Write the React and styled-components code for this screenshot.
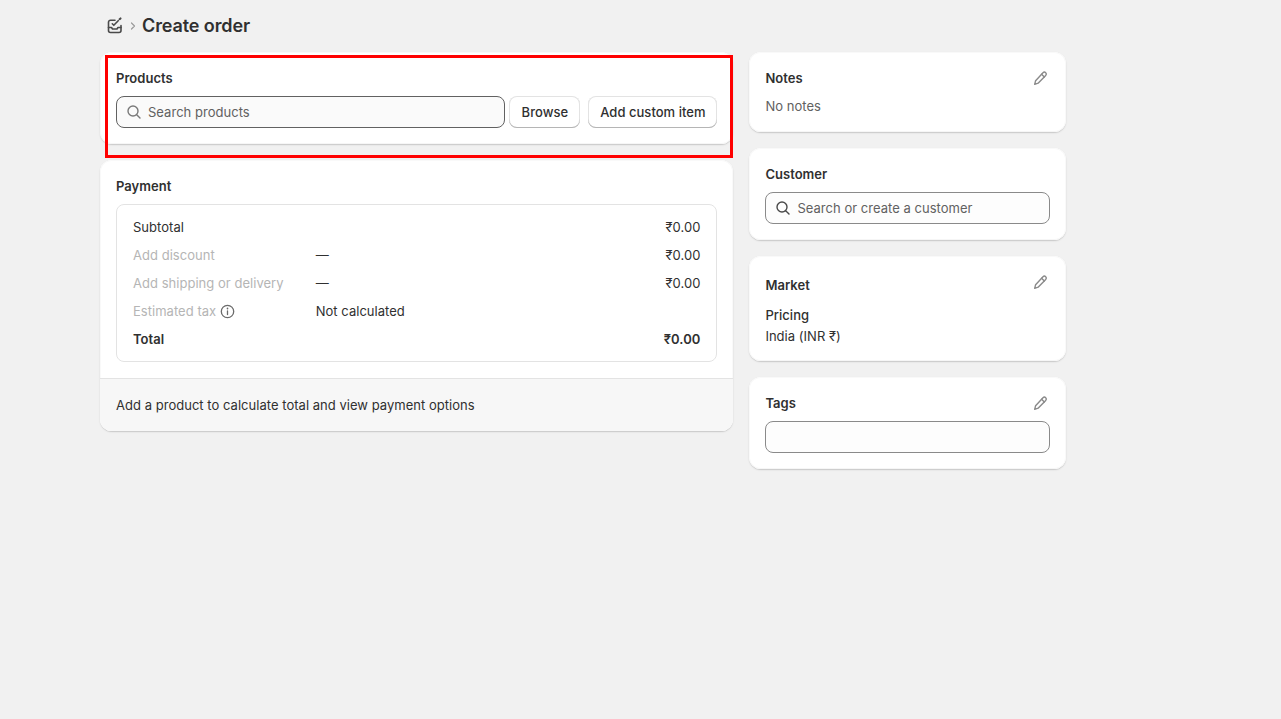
import React from 'react';
import styled, { createGlobalStyle } from 'styled-components';

const GlobalStyle = createGlobalStyle`
  html, body {
    margin: 0;
    background: #f1f1f1;
    font-family: Inter, "Noto Sans", sans-serif;
    font-size: 13px;
    line-height: 20px;
    letter-spacing: 0.03px;
    color: #303030;
  }
  * { box-sizing: border-box; }
`;

const Page = styled.div`
  width: 967px;
  min-height: 719px;
  margin-left: 100px;
`;

const Breadcrumb = styled.div`
  height: 52px;
  display: flex;
  align-items: center;
  padding-left: 6px;
`;

const ChevronMark = styled.span`
  display: flex;
  margin: 0 3px 0 3px;
  color: #9a9a9a;
`;

const PageTitle = styled.h1`
  margin: 0;
  font-size: 18px;
  line-height: 24px;
  font-weight: 600;
  letter-spacing: -0.1px;
  color: #303030;
`;

const Layout = styled.div`
  display: grid;
  grid-template-columns: 633.4px 317px;
  gap: 16px;
  align-items: start;
`;

const Column = styled.div`
  display: flex;
  flex-direction: column;
  gap: 16px;
`;

const Card = styled.section`
  position: relative;
  background: #fff;
  border-radius: 12px;
  box-shadow: 0 1px 0 0 rgba(26, 26, 26, 0.07), 0 1px 0 0 #f9f9f9 inset,
    1px 0 0 0 #f9f9f9 inset, -1px 0 0 0 #f9f9f9 inset, 0 -1px 0 0 #f6f6f6 inset,
    0 1px 2px rgba(0, 0, 0, 0.12);
  overflow: ${(p) => (p.$clip ? 'hidden' : 'visible')};
`;

const CardBody = styled.div`
  padding: 16px 16px ${(p) => p.$bottom ?? 16}px;
`;

const HeadRow = styled.div`
  display: flex;
  justify-content: space-between;
  align-items: flex-start;
  margin-bottom: ${(p) => p.$after ?? 8}px;
`;

const CardTitle = styled.h2`
  margin: ${(p) => p.$top || 0}px 0 0;
  font-size: 13px;
  line-height: 20px;
  font-weight: 600;
  color: #303030;
`;

const EditMark = styled.span`
  display: flex;
  width: 20px;
  height: 20px;
  color: #8a8a8a;
`;

const SearchRow = styled.div`
  display: flex;
  gap: 4px;
`;

const InputBox = styled.div`
  flex: 1;
  height: 32px;
  display: flex;
  align-items: center;
  gap: 6px;
  padding: 0 9px;
  background: #fdfdfd;
  border: 1px solid #8a8a8a;
  border-radius: 8px;
  color: #616161;
`;

const ProductsInput = styled(InputBox)`
  background: #fafafa;
  border-color: #616161;
`;

const SearchMark = styled.span`
  display: flex;
  color: ${(p) => p.$color || '#4a4a4a'};
`;

const Button = styled.button`
  flex: none;
  width: ${(p) => p.$width}px;
  height: 32px;
  margin-left: ${(p) => p.$offset || 0}px;
  padding: 0;
  font: 550 13px/20px Inter, "Noto Sans", sans-serif;
  letter-spacing: 0.03px;
  color: #303030;
  background: #fff;
  border: 0;
  border-radius: 8px;
  box-shadow: 0 -1px 0 0 #b5b5b5 inset, 0 0 0 1px #e3e3e3 inset;
`;

const SummaryBox = styled.div`
  border: 1px solid #e3e3e3;
  border-radius: 8px;
  padding: 8px 16px;
`;

const SummaryRow = styled.div`
  display: grid;
  grid-template-columns: 182.7px 1fr auto;
  align-items: center;
  height: 28px;
  font-weight: ${(p) => (p.$strong ? 600 : 400)};
`;

const SummaryLabel = styled.span`
  display: flex;
  align-items: center;
  gap: 4px;
  color: ${(p) => (p.$muted ? '#b5b5b5' : '#303030')};
`;

const InfoMark = styled.span`
  display: flex;
  color: #6b6b6b;
`;

const PayFooter = styled.div`
  height: 53px;
  display: flex;
  align-items: center;
  padding: 0 16px;
  background: #f7f7f7;
  border-top: 1px solid #e3e3e3;
`;

const Muted = styled.div`
  color: #616161;
`;

const PricingLabel = styled.div`
  font-weight: 500;
  line-height: 21px;
`;

const EmptyInput = styled(InputBox)`
  flex: none;
`;

const Highlight = styled.div`
  position: absolute;
  left: 105px;
  top: 55px;
  width: 628px;
  height: 103px;
  border: 3px solid #f00;
  pointer-events: none;
`;

const OrderIcon = () => (
  <svg width="18" height="18" viewBox="0 0 18 18" fill="none" stroke="#4a4a4a" strokeWidth="1.6" strokeLinecap="round" strokeLinejoin="round">
    <path d="M9 3.2H4.5a2 2 0 0 0-2 2v8.3a2 2 0 0 0 2 2h8.5a2 2 0 0 0 2-2V8.5" />
    <path d="M2.5 10.5h3l1 1.5h4.5l1-1.5h3" />
    <path d="M6.3 6.8l1.5 1.5 4.4-4.6" />
    <path d="M13.6 2.2l.9-.8" strokeWidth="2" />
  </svg>
);

const Chevron = () => (
  <svg width="12" height="12" viewBox="0 0 12 12" fill="none" stroke="currentColor" strokeWidth="1.2" strokeLinecap="round" strokeLinejoin="round">
    <path d="M4.5 3l3 3-3 3" />
  </svg>
);

const SearchIcon = () => (
  <svg width="16" height="16" viewBox="0 0 16 16" fill="none" stroke="currentColor" strokeWidth="1.4" strokeLinecap="round">
    <circle cx="7" cy="7" r="5" />
    <path d="M10.7 10.7l3.3 3.3" />
  </svg>
);

const PencilIcon = () => (
  <svg width="20" height="20" viewBox="0 0 20 20" fill="none" stroke="currentColor" strokeWidth="1.4" strokeLinecap="round" strokeLinejoin="round">
    <path d="M13 4.7a1.9 1.9 0 0 1 2.7 2.7l-7.6 7.8-3.4 1.1.9-3.6z" />
    <path d="M11.6 6.2l2.7 2.7" />
  </svg>
);

const InfoIcon = () => (
  <svg width="15" height="15" viewBox="0 0 15 15" fill="none" stroke="currentColor" strokeWidth="1.3" strokeLinecap="round">
    <circle cx="7.5" cy="7.5" r="6.2" />
    <path d="M7.5 7v3.6" />
    <path d="M7.5 4.4v.2" strokeWidth="1.7" />
  </svg>
);

const rows = [
  { label: 'Subtotal', middle: '', value: '₹0.00' },
  { label: 'Add discount', middle: '—', value: '₹0.00', muted: true },
  { label: 'Add shipping or delivery', middle: '—', value: '₹0.00', muted: true },
  { label: 'Estimated tax', middle: 'Not calculated', value: '', muted: true, info: true },
  { label: 'Total', middle: '', value: '₹0.00', strong: true },
];

const Edit = () => (
  <EditMark>
    <PencilIcon />
  </EditMark>
);

const App = () => {
  return (
    <>
      <GlobalStyle />
      <Page>
        <Breadcrumb>
          <OrderIcon />
          <ChevronMark>
            <Chevron />
          </ChevronMark>
          <PageTitle>Create order</PageTitle>
        </Breadcrumb>
        <Layout>
          <Column>
            <Card>
              <CardBody>
                <HeadRow>
                  <CardTitle>Products</CardTitle>
                </HeadRow>
                <SearchRow>
                  <ProductsInput>
                    <SearchMark $color="#7a7a7a">
                      <SearchIcon />
                    </SearchMark>
                    Search products
                  </ProductsInput>
                  <Button $width={71}>Browse</Button>
                  <Button $width={129} $offset={4}>
                    Add custom item
                  </Button>
                </SearchRow>
              </CardBody>
            </Card>
            <Card $clip>
              <CardBody>
                <HeadRow>
                  <CardTitle>Payment</CardTitle>
                </HeadRow>
                <SummaryBox>
                  {rows.map((row) => (
                    <SummaryRow key={row.label} $strong={row.strong}>
                      <SummaryLabel $muted={row.muted}>
                        {row.label}
                        {row.info && (
                          <InfoMark>
                            <InfoIcon />
                          </InfoMark>
                        )}
                      </SummaryLabel>
                      <span>{row.middle}</span>
                      <span>{row.value}</span>
                    </SummaryRow>
                  ))}
                </SummaryBox>
              </CardBody>
              <PayFooter>Add a product to calculate total and view payment options</PayFooter>
            </Card>
          </Column>
          <Column>
            <Card>
              <CardBody>
                <HeadRow>
                  <CardTitle>Notes</CardTitle>
                  <Edit />
                </HeadRow>
                <Muted>No notes</Muted>
              </CardBody>
            </Card>
            <Card>
              <CardBody>
                <HeadRow>
                  <CardTitle>Customer</CardTitle>
                </HeadRow>
                <InputBox>
                  <SearchMark>
                    <SearchIcon />
                  </SearchMark>
                  Search or create a customer
                </InputBox>
              </CardBody>
            </Card>
            <Card>
              <CardBody $bottom={15}>
                <HeadRow $after={10}>
                  <CardTitle $top={3}>Market</CardTitle>
                  <Edit />
                </HeadRow>
                <PricingLabel>Pricing</PricingLabel>
                <div>India (INR ₹)</div>
              </CardBody>
            </Card>
            <Card>
              <CardBody>
                <HeadRow>
                  <CardTitle>Tags</CardTitle>
                  <Edit />
                </HeadRow>
                <EmptyInput />
              </CardBody>
            </Card>
          </Column>
        </Layout>
      </Page>
      <Highlight />
    </>
  );
};

export default App;
